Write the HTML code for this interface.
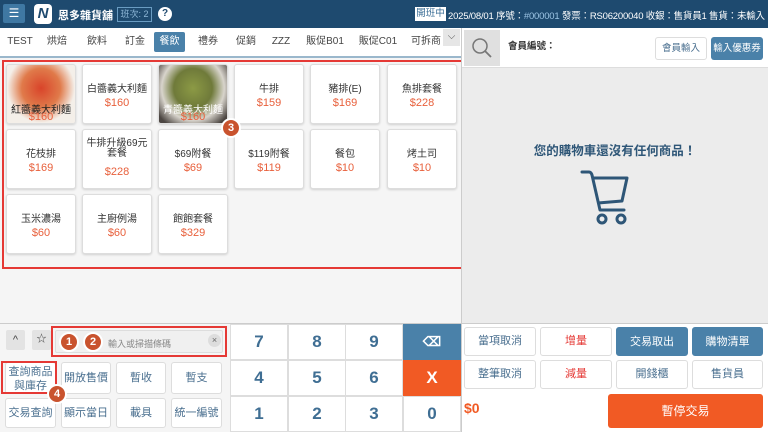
<!DOCTYPE html>
<html><head><meta charset="utf-8"><style>
*{box-sizing:border-box;margin:0;padding:0;white-space:nowrap}
body{width:768px;height:432px;overflow:hidden;font-family:"Liberation Sans","Noto Sans CJK TC",sans-serif;background:#f5f5f5;position:relative;font-size:11px}
.a{position:absolute}
.hdr{left:0;top:0;width:768px;height:28px;background:#1e4a6f}
.tabs{left:0;top:28px;width:461px;height:30px;background:#fff;border-bottom:2px solid #9ab7cc}
.tab{position:absolute;top:4px;height:20px;line-height:20px;font-size:10px;color:#444;text-align:center}
.card{position:absolute;width:70px;height:60px;background:#fff;border:1px solid #ddd;border-radius:3px;box-shadow:0 1px 2px rgba(0,0,0,.15);text-align:center;font-size:10px;color:#333}
.card .n{position:absolute;left:0;right:0;top:15px}
.card .p{position:absolute;left:0;right:0;top:32px;color:#e8603c;font-size:11px}
.btn{position:absolute;background:#fff;border:1px solid #ddd;border-radius:3px;text-align:center;color:#4a6f8f;font-size:11px}
.num{position:absolute;width:58px;height:36px;border:1px solid #ddd;background:#fff;text-align:center;line-height:34px;font-size:17px;font-weight:bold;color:#3f6e93}
.badge{position:absolute;width:20px;height:20px;border-radius:50%;background:#c9532e;border:2px solid #fff;color:#fff;font-weight:bold;font-size:11px;text-align:center;line-height:16px}
</style></head><body>
<div class="a hdr"></div>
<div class="a" style="left:3px;top:4px;width:22px;height:19px;background:#3f78a3;border-radius:2px;color:#fff;text-align:center;line-height:19px;font-size:12px">☰</div>
<div class="a" style="left:34px;top:4px;width:18px;height:20px;background:#fff;border-radius:4px;color:#1e4a6f;font-weight:bold;font-style:italic;text-align:center;line-height:20px;font-size:15px">N</div>
<div class="a" style="left:58px;top:7px;color:#fff;font-size:11px;font-weight:bold">恩多雜貨舖</div>
<div class="a" style="left:117px;top:7px;width:35px;height:15px;border:1px solid #6a9cc2;color:#8fb8d8;font-size:9px;line-height:13px;text-align:center">班次: 2</div>
<div class="a" style="left:158px;top:7px;width:14px;height:14px;border-radius:50%;background:#fff;color:#1e4a6f;font-size:10px;font-weight:bold;text-align:center;line-height:14px">?</div>
<div class="a" style="left:415px;top:7px;width:31px;height:14px;background:#fff;color:#3a6d96;font-size:9.5px;text-align:center;line-height:14px">開班中</div>
<div class="a" style="left:448px;top:8px;color:#fff;font-size:9.5px;letter-spacing:-0.2px">2025/08/01 序號：<span style="color:#9cc4e4">#000001</span> 發票：RS06200040 收銀：售貨員1 售貨：未輸入</div>

<div class="a tabs"></div>
<div class="tab" style="left:6px;top:32px;width:28px">TEST</div>
<div class="tab" style="left:44px;top:32px;width:26px">烘焙</div>
<div class="tab" style="left:84px;top:32px;width:26px">飲料</div>
<div class="tab" style="left:122px;top:32px;width:26px">訂金</div>
<div class="tab" style="left:154px;top:32px;width:31px;background:#4a81a9;color:#fff;border-radius:2px">餐飲</div>
<div class="tab" style="left:195px;top:32px;width:26px">禮券</div>
<div class="tab" style="left:233px;top:32px;width:26px">促銷</div>
<div class="tab" style="left:268px;top:32px;width:26px">ZZZ</div>
<div class="tab" style="left:305px;top:32px;width:40px">販促B01</div>
<div class="tab" style="left:358px;top:32px;width:40px">販促C01</div>
<div class="tab" style="left:410px;top:32px;width:32px">可拆商</div>
<div class="a" style="left:443px;top:29px;width:17px;height:17px;background:#e6e6e6;color:#555;text-align:center;font-size:10px;line-height:16px">⌵</div>

<div class="a" style="left:2px;top:60px;width:461px;height:209px;border:2px solid #e53935"></div>
<div class="card" style="left:6px;top:64px;background:radial-gradient(ellipse at 50% 40%,#d9442a 0,#e07a4a 40%,#f4efe9 70%)"><div class="n" style="top:36px;color:#222">紅醬義大利麵</div><div class="p" style="top:46px">$160</div></div>
<div class="card" style="left:82px;top:64px"><div class="n">白醬義大利麵</div><div class="p">$160</div></div>
<div class="card" style="left:158px;top:64px;background:radial-gradient(ellipse at 50% 40%,#8c9a45 0,#6f7a3a 40%,#d8d4cc 65%,#4c4642 90%)"><div class="n" style="top:36px;color:#fff">青醬義大利麵</div><div class="p" style="top:46px">$160</div></div>
<div class="card" style="left:234px;top:64px"><div class="n">牛排</div><div class="p">$159</div></div>
<div class="card" style="left:310px;top:64px"><div class="n">豬排(E)</div><div class="p">$169</div></div>
<div class="card" style="left:387px;top:64px"><div class="n">魚排套餐</div><div class="p">$228</div></div>
<div class="card" style="left:6px;top:129px"><div class="n">花枝排</div><div class="p">$169</div></div>
<div class="card" style="left:82px;top:129px"><div class="n" style="top:9px;line-height:10px">牛排升級69元<br>套餐</div><div class="p" style="top:36px">$228</div></div>
<div class="card" style="left:158px;top:129px"><div class="n">$69附餐</div><div class="p">$69</div></div>
<div class="card" style="left:234px;top:129px"><div class="n">$119附餐</div><div class="p">$119</div></div>
<div class="card" style="left:310px;top:129px"><div class="n">餐包</div><div class="p">$10</div></div>
<div class="card" style="left:387px;top:129px"><div class="n">烤土司</div><div class="p">$10</div></div>
<div class="card" style="left:6px;top:194px"><div class="n">玉米濃湯</div><div class="p">$60</div></div>
<div class="card" style="left:82px;top:194px"><div class="n">主廚例湯</div><div class="p">$60</div></div>
<div class="card" style="left:158px;top:194px"><div class="n">飽飽套餐</div><div class="p">$329</div></div>
<div class="badge" style="left:221px;top:118px">3</div>

<div class="a" style="left:461px;top:28px;width:307px;height:296px;background:#ececec;border-left:1px solid #ccc"></div>
<div class="a" style="left:462px;top:28px;width:306px;height:40px;background:#fff;border-bottom:1px solid #ddd"></div>
<div class="a" style="left:464px;top:30px;width:36px;height:36px;background:#e0e0e0"></div>
<svg class="a" style="left:470px;top:36px" width="24" height="24"><circle cx="10" cy="10" r="7" fill="none" stroke="#777" stroke-width="1.5"/><line x1="15" y1="15" x2="21" y2="21" stroke="#777" stroke-width="1.8"/></svg>
<div class="a" style="left:508px;top:38px;font-size:9.5px;font-weight:bold;color:#333">會員編號：</div>
<div class="a" style="left:655px;top:37px;width:52px;height:23px;background:#fff;border:1px solid #ddd;border-radius:3px;font-size:9.5px;color:#4a6f8f;text-align:center;line-height:21px">會員輸入</div>
<div class="a" style="left:711px;top:37px;width:52px;height:23px;background:#4a81a9;border-radius:3px;font-size:9.5px;color:#fff;text-align:center;line-height:23px">輸入優惠券</div>
<div class="a" style="left:462px;top:140px;width:306px;text-align:center;font-size:12.5px;font-weight:bold;color:#2e5677">您的購物車還沒有任何商品！</div>
<svg class="a" style="left:580px;top:168px" width="50" height="60" viewBox="0 0 50 60"><path d="M2 4 H9 Q11 4 12 7 L20 42 H44" fill="none" stroke="#2e5677" stroke-width="3" stroke-linecap="round" stroke-linejoin="round"/><path d="M12 10 H47 L42 33 L18 35" fill="none" stroke="#2e5677" stroke-width="3" stroke-linejoin="round"/><circle cx="22" cy="51" r="4" fill="none" stroke="#2e5677" stroke-width="3"/><circle cx="41" cy="51" r="4" fill="none" stroke="#2e5677" stroke-width="3"/></svg>

<div class="a" style="left:0;top:323px;width:768px;height:1px;background:#ccc"></div>
<div class="a" style="left:0;top:324px;width:230px;height:108px;background:#f5f5f5"></div>
<div class="a" style="left:6px;top:330px;width:19px;height:20px;background:#e3e3e3;border-radius:2px;text-align:center;line-height:20px;color:#444">^</div>
<div class="a" style="left:32px;top:330px;width:19px;height:20px;background:#e3e3e3;border-radius:2px;text-align:center;line-height:20px;color:#444;font-size:10px">☆</div>
<div class="a" style="left:51px;top:326px;width:176px;height:31px;border:2px solid #e53935"></div>
<div class="a" style="left:55px;top:330px;width:168px;height:23px;background:#f0f0f0;border:1px solid #ddd;border-radius:2px"></div>
<div class="badge" style="left:59px;top:332px">1</div>
<div class="badge" style="left:83px;top:332px">2</div>
<div class="a" style="left:108px;top:337px;font-size:9px;color:#888">輸入或掃描條碼</div>
<div class="a" style="left:208px;top:334px;width:13px;height:13px;border-radius:50%;background:#ddd;color:#666;font-size:9px;text-align:center;line-height:13px">×</div>
<div class="btn" style="left:5px;top:362px;width:51px;height:32px;line-height:14px;padding-top:2px">查詢商品<br>與庫存</div>
<div class="a" style="left:1px;top:361px;width:56px;height:33px;border:2px solid #e53935"></div>
<div class="btn" style="left:61px;top:362px;width:50px;height:32px;line-height:30px">開放售價</div>
<div class="btn" style="left:116px;top:362px;width:50px;height:32px;line-height:30px">暫收</div>
<div class="btn" style="left:171px;top:362px;width:51px;height:32px;line-height:30px">暫支</div>
<div class="btn" style="left:5px;top:398px;width:51px;height:30px;line-height:28px">交易查詢</div>
<div class="btn" style="left:61px;top:398px;width:50px;height:30px;line-height:28px">顯示當日</div>
<div class="btn" style="left:116px;top:398px;width:50px;height:30px;line-height:28px">載具</div>
<div class="btn" style="left:171px;top:398px;width:51px;height:30px;line-height:28px">統一編號</div>
<div class="badge" style="left:47px;top:384px">4</div>

<div class="num" style="left:230px;top:324px">7</div>
<div class="num" style="left:288px;top:324px">8</div>
<div class="num" style="left:345px;top:324px">9</div>
<div class="num" style="left:403px;top:324px;background:#4a81a9;border-color:#4a81a9;color:#fff;font-size:13px">⌫</div>
<div class="num" style="left:230px;top:360px">4</div>
<div class="num" style="left:288px;top:360px">5</div>
<div class="num" style="left:345px;top:360px">6</div>
<div class="num" style="left:403px;top:360px;background:#f15a24;border-color:#f15a24;color:#fff">X</div>
<div class="num" style="left:230px;top:396px">1</div>
<div class="num" style="left:288px;top:396px">2</div>
<div class="num" style="left:345px;top:396px">3</div>
<div class="num" style="left:403px;top:396px">0</div>

<div class="a" style="left:461px;top:324px;width:307px;height:108px;background:#fff;border-left:1px solid #ccc"></div>
<div class="btn" style="left:464px;top:327px;width:72px;height:29px;line-height:27px">當項取消</div>
<div class="btn" style="left:540px;top:327px;width:72px;height:29px;line-height:27px;color:#e53935">增量</div>
<div class="btn" style="left:616px;top:327px;width:72px;height:29px;line-height:29px;background:#4a81a9;border-color:#4a81a9;color:#fff">交易取出</div>
<div class="btn" style="left:692px;top:327px;width:71px;height:29px;line-height:29px;background:#4a81a9;border-color:#4a81a9;color:#fff">購物清單</div>
<div class="btn" style="left:464px;top:360px;width:72px;height:29px;line-height:27px">整筆取消</div>
<div class="btn" style="left:540px;top:360px;width:72px;height:29px;line-height:27px;color:#e53935">減量</div>
<div class="btn" style="left:616px;top:360px;width:72px;height:29px;line-height:27px">開錢櫃</div>
<div class="btn" style="left:692px;top:360px;width:71px;height:29px;line-height:27px">售貨員</div>
<div class="a" style="left:464px;top:400px;font-size:14px;font-weight:bold;color:#f15a24">$0</div>
<div class="a" style="left:608px;top:394px;width:155px;height:34px;background:#f15a24;border-radius:3px;color:#fff;font-size:12px;text-align:center;line-height:34px">暫停交易</div>
</body></html>
